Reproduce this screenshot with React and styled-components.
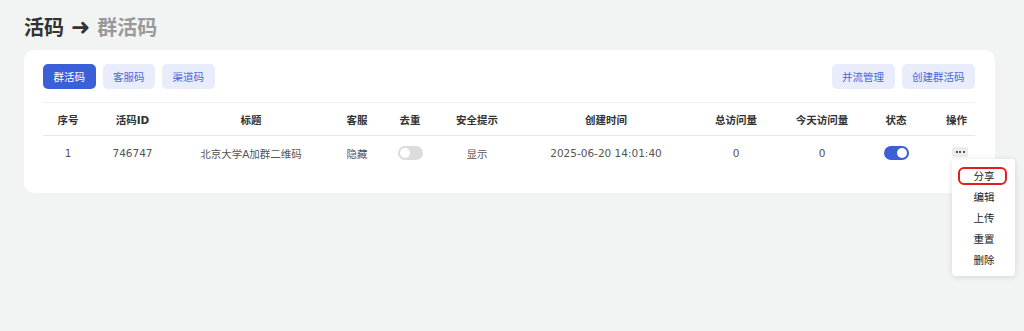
import React, { useState } from "react";
import styled, { createGlobalStyle } from "styled-components";

const GlobalStyle = createGlobalStyle`
  body {
    margin: 0;
    background: #f2f3f3;
    font-family: "DejaVu Sans", "Noto Sans CJK SC", sans-serif;
    color: #333;
  }
`;

const columns = [
  { key: "index", title: "序号", width: 50 },
  { key: "id", title: "活码ID", width: 79 },
  { key: "title", title: "标题", width: 158 },
  { key: "service", title: "客服", width: 54 },
  { key: "dedupe", title: "去重", width: 52 },
  { key: "safe", title: "安全提示", width: 82 },
  { key: "created", title: "创建时间", width: 176 },
  { key: "total", title: "总访问量", width: 84 },
  { key: "today", title: "今天访问量", width: 88 },
  { key: "status", title: "状态", width: 60 },
  { key: "ops", title: "操作", width: 49 },
];

const gridCols = columns.map((c) => `${c.width}px`).join(" ");

const menuItems = ["分享", "编辑", "上传", "重置", "删除"];

function App() {
  const [dedupe, setDedupe] = useState(false);
  const [status, setStatus] = useState(true);
  const [tab, setTab] = useState("群活码");

  return (
    <Page>
      <GlobalStyle />
      <Title>
        活码 <Arrow>➜</Arrow> <Sub>群活码</Sub>
      </Title>
      <Card>
        <Toolbar>
          <Group>
            {["群活码", "客服码", "渠道码"].map((t) => (
              <Button key={t} $primary={tab === t} onClick={() => setTab(t)}>
                {t}
              </Button>
            ))}
          </Group>
          <Group>
            <Button>并流管理</Button>
            <Button>创建群活码</Button>
          </Group>
        </Toolbar>

        <Table>
          <HeadRow>
            {columns.map((c) => (
              <HeadCell key={c.key} $right={c.key === "ops"}>
                {c.title}
              </HeadCell>
            ))}
          </HeadRow>
          <Row>
            <Cell>1</Cell>
            <Cell>746747</Cell>
            <Cell>北京大学A加群二维码</Cell>
            <Cell>隐藏</Cell>
            <Cell>
              <Toggle $on={dedupe} onClick={() => setDedupe(!dedupe)} />
            </Cell>
            <Cell>显示</Cell>
            <Cell>2025-06-20 14:01:40</Cell>
            <Cell>0</Cell>
            <Cell>0</Cell>
            <Cell>
              <Toggle $on={status} onClick={() => setStatus(!status)} />
            </Cell>
            <Cell $right>
              <OpsWrap>
                <MoreBtn>
                  <Dot />
                  <Dot />
                  <Dot />
                </MoreBtn>
                <Menu>
                  {menuItems.map((m, i) => (
                    <MenuItem key={m} $active={i === 0}>
                      {m}
                    </MenuItem>
                  ))}
                </Menu>
              </OpsWrap>
            </Cell>
          </Row>
        </Table>
      </Card>
    </Page>
  );
}

const Page = styled.div`
  padding: 14px 29px 40px 24px;
  min-height: 331px;
  box-sizing: border-box;
`;

const Title = styled.h1`
  margin: 0 0 8px;
  font-size: 20px;
  line-height: 28px;
  font-weight: 700;
  color: #333;
`;

const Arrow = styled.span`
  font-size: 23px;
  line-height: 20px;
  color: #333;
`;

const Sub = styled.span`
  color: #999;
`;

const Card = styled.div`
  background: #fff;
  border-radius: 10px;
  padding: 14px 20px 23px 19px;
`;

const Toolbar = styled.div`
  display: flex;
  justify-content: space-between;
  align-items: center;
  margin-bottom: 13px;
`;

const Group = styled.div`
  display: flex;
  gap: 7px;
`;

const Button = styled.button`
  height: 25px;
  padding: 0 10.5px;
  border: none;
  border-radius: 5px;
  font-family: inherit;
  font-size: 10.5px;
  cursor: pointer;
  background: ${(p) => (p.$primary ? "#3b5fd6" : "#e9edfb")};
  color: ${(p) => (p.$primary ? "#fff" : "#4a68d8")};
`;

const Table = styled.div`
  border-top: 1px solid #eef0f4;
`;

const HeadRow = styled.div`
  display: grid;
  grid-template-columns: ${gridCols};
  height: 32px;
  align-items: center;
  border-bottom: 1px solid #e4e6ea;
`;

const Row = styled.div`
  display: grid;
  grid-template-columns: ${gridCols};
  height: 34px;
  align-items: center;
`;

const HeadCell = styled.div`
  text-align: ${(p) => (p.$right ? "right" : "center")};
  padding-right: ${(p) => (p.$right ? "8px" : "0")};
  font-size: 10.5px;
  font-weight: 700;
  color: #333;
`;

const Cell = styled.div`
  display: flex;
  justify-content: ${(p) => (p.$right ? "flex-end" : "center")};
  align-items: center;
  padding-right: ${(p) => (p.$right ? "7px" : "0")};
  font-size: 10.5px;
  color: #555;
`;

const Toggle = styled.span`
  position: relative;
  display: inline-block;
  width: 25px;
  height: 14px;
  border-radius: 7px;
  cursor: pointer;
  background: ${(p) => (p.$on ? "#3b5fd6" : "#dcdcdc")};
  &::after {
    content: "";
    position: absolute;
    top: 2px;
    left: ${(p) => (p.$on ? "13px" : "2px")};
    width: 10px;
    height: 10px;
    border-radius: 50%;
    background: #fff;
  }
`;

const OpsWrap = styled.div`
  position: relative;
  margin-top: -2px;
`;

const MoreBtn = styled.div`
  display: flex;
  justify-content: center;
  align-items: center;
  gap: 1.5px;
  width: 16px;
  height: 10px;
  border-radius: 2px;
  background: #ececec;
`;

const Dot = styled.span`
  width: 2px;
  height: 2px;
  background: #555;
`;

const Menu = styled.div`
  position: absolute;
  top: 12px;
  left: 0;
  width: 63px;
  padding: 7px 0 5px;
  background: #fff;
  border-radius: 4px;
  box-shadow: 0 1px 6px rgba(0, 0, 0, 0.12);
  z-index: 2;
`;

const MenuItem = styled.div`
  position: relative;
  height: 21px;
  line-height: 21px;
  text-align: center;
  font-size: 10.5px;
  color: #222;
  padding-left: 1px;
  &::before {
    content: "";
    display: ${(p) => (p.$active ? "block" : "none")};
    position: absolute;
    top: 1px;
    bottom: 2px;
    left: 6px;
    right: 8px;
    border: 2px solid #e21d1d;
    border-radius: 6px;
  }
`;

export default App;
